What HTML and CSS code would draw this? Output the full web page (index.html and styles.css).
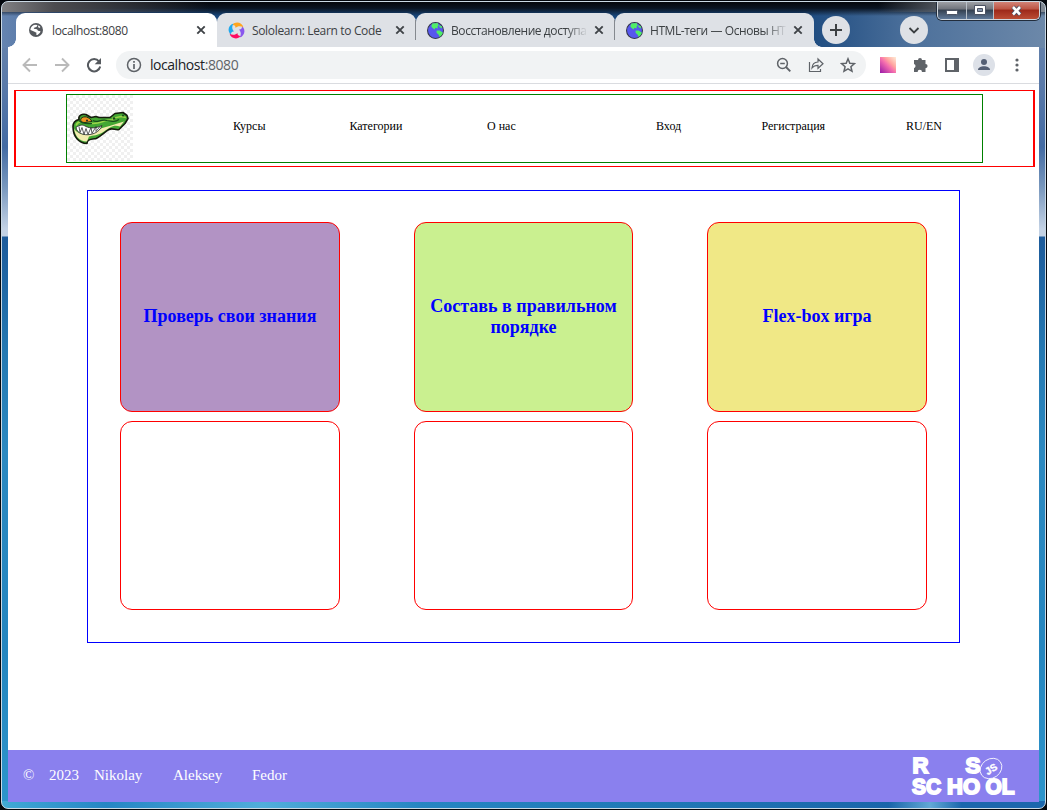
FILE: index.html
```
<!DOCTYPE html>
<html lang="ru">
<head>
<meta charset="utf-8">
<title>localhost:8080</title>
<link rel="stylesheet" href="styles.css">
</head>
<body>
<svg class="defs" width="0" height="0">
  <defs>
    <symbol id="x" viewBox="0 0 10 10"><path d="M1.3 1.3l7.4 7.4M8.7 1.3L1.3 8.7" stroke="#3f4347" stroke-width="1.9" fill="none"/></symbol>
    <symbol id="globe" viewBox="0 0 16 16"><circle cx="8" cy="8" r="7.5" fill="#5757ee" stroke="#35384a"/><path d="M5 1.500L10 1l1 2-1 1v2L8 5.500 7 7 5 5.500 4 4zM9 8h3l3 2-1 2-2 2-1-2-2-2zM11 3l3 1v2l-2-1z" fill="#50ee66"/></symbol>
  </defs>
</svg>
<div class="window">
  <div class="titlebar">
    <div class="tab tab-active">
      <svg width="16" height="16" viewBox="0 0 16 16"><circle cx="8" cy="8" r="7" fill="#55595e"/><path d="M2.500 7C3 5 4.500 3.200 7 2.700L9.500 3 8.500 5l-2 .5-.8 1.300L9 7.200l1 1.600 2.500.4-.5 1.600L9.500 13l-1.300-.3.300-1.900L6 9.500 2.500 8zM10.500 3.300l2 1.700-1.200 1L10 5z" fill="#fff"/></svg>
      <span class="tab-title">localhost:8080</span>
      <svg class="close" width="10" height="10"><use href="#x"/></svg>
    </div>
    <div class="tab">
      <svg width="17" height="17" viewBox="0 0 17 17"><path d="M4.500 3C7-1 14 0 15.500 5.500 12.500 3.500 9.500 4 7.500 6 7.800 4 6.500 3 4.500 3z" fill="#ffa51f"/><path d="M14 4.500C18 7 17 14 11.500 15.500 13.500 12.500 13 9.500 11 7.500 13 7.800 14 6.500 14 4.500z" fill="#8957ee"/><path d="M12.500 14C10 18 3 17 1.500 11.500 4.500 13.500 7.500 13 9.500 11 9.200 13 10.500 14 12.500 14z" fill="#ff0b62"/><path d="M3 12.500C-1 10 0 3 5.500 1.500 3.500 4.500 4 7.500 6 9.500 4 9.200 3 10.500 3 12.500z" fill="#20a8ec"/></svg>
      <span class="tab-title t2">Sololearn: Learn to Code</span>
      <svg class="close" width="10" height="10"><use href="#x"/></svg>
    </div>
    <div class="tab divided">
      <svg width="17" height="17"><use href="#globe"/></svg>
      <span class="tab-title t3">Восстановление доступа</span>
      <svg class="close" width="10" height="10"><use href="#x"/></svg>
    </div>
    <div class="tab divided last">
      <svg width="17" height="17"><use href="#globe"/></svg>
      <span class="tab-title t4">HTML-теги — Основы HT</span>
      <svg class="close" width="10" height="10"><use href="#x"/></svg>
    </div>
    <div class="round"><svg width="12" height="12"><path d="M6 0v12M0 6h12" stroke="#3c4043" stroke-width="2"/></svg></div>
    <div class="round search"><svg width="12" height="12"><path d="M1.500 4L6 8.500 10.500 4" stroke="#3c4043" stroke-width="1.800" fill="none"/></svg></div>
    <div class="controls">
      <div class="ctl min"><svg width="12" height="5"><rect x=".5" y=".5" width="11" height="4" rx="1" fill="#fff" stroke="#4c5363"/></svg></div>
      <div class="ctl max"><svg width="12" height="10"><path d="M.5.5h11v9H.5z" fill="#fff" stroke="#4c5363"/><path d="M3.500 3.500h5v3h-5z" fill="#8796ad" stroke="#4c5363"/></svg></div>
      <div class="ctl quit"><svg width="13" height="11" fill="none"><path d="M3 2l7 7.500M10 2L3 9.500" stroke="#4c5065" stroke-width="4.400"/><path d="M3 2l7 7.500M10 2L3 9.500" stroke="#fff" stroke-width="2.600"/></svg></div>
    </div>
  </div>
  <div class="toolbar">
    <div class="history">
      <svg width="16" height="16" fill="none" stroke="#bababa" stroke-width="1.900"><path d="M15 8H2M8 1.500L1.500 8 8 14.500"/></svg>
      <svg width="16" height="16" fill="none" stroke="#bababa" stroke-width="1.900"><path d="M1 8h13M8 1.500L14.500 8 8 14.500"/></svg>
      <svg width="16" height="16"><path d="M13 4.300A6.200 6.200 0 1 0 14.200 9.500" fill="none" stroke="#55595e" stroke-width="2"/><path d="M15 1v6.300H8.700z" fill="#55595e"/></svg>
    </div>
    <div class="address">
      <svg width="16" height="16"><circle cx="8" cy="8" r="6.500" fill="none" stroke="#5f6368" stroke-width="1.500"/><path d="M8 7v5M8 4v1.700" stroke="#5f6368" stroke-width="1.700"/></svg>
      <span class="url">localhost<span class="port">:8080</span></span>
      <div class="actions">
        <svg width="16" height="16" fill="none" stroke="#5f6368"><circle cx="6.500" cy="6.500" r="4.900" stroke-width="1.500"/><path d="M10 10l4.300 4.300" stroke-width="1.900"/><path d="M4.200 6.500h4.600" stroke-width="1.300"/></svg>
        <svg width="16" height="16" fill="none" stroke="#5f6368" stroke-width="1.200"><path d="M1.500 5v9.500h11V12"/><path d="M4 11C4.200 7.300 6.500 5.200 10 5V2l5 4.700-5 4.600V8.300C7.500 8.300 5.500 9 4 11z"/></svg>
        <svg width="16" height="16" fill="none" stroke="#5f6368" stroke-width="1.500"><path d="M8 1.800l1.800 4.400 4.700.4-3.600 3.100 1.100 4.600L8 11.900l-4 2.400 1.100-4.600-3.600-3.100 4.700-.4z"/></svg>
      </div>
    </div>
    <div class="extensions">
      <i class="ext"></i>
      <svg width="16" height="16"><path d="M5 3a2 2 0 0 1 4 0h3.500v4a2.100 2.100 0 1 1 0 4.200V15H9a2.200 2.200 0 0 0-4.400 0H1v-3.800a2.200 2.200 0 0 0 0-4.200V3z" fill="#5f6368"/></svg>
      <svg width="14" height="14"><path d="M0 0h14v14H0zM2 2v10h7V2z" fill="#5f6368" fill-rule="evenodd"/></svg>
      <svg width="22" height="22"><circle cx="11" cy="11" r="11" fill="#dde1e8"/><circle cx="11" cy="8" r="3" fill="#535e73"/><path d="M5 16c0-5 12-5 12 0z" fill="#535e73"/></svg>
      <svg class="more" width="4" height="14" fill="#5f6368"><circle cx="2" cy="2" r="1.600"/><circle cx="2" cy="7" r="1.600"/><circle cx="2" cy="12" r="1.600"/></svg>
    </div>
  </div>
  <div class="page">
    <header class="header">
      <div class="header-inner">
        <svg class="logo" width="66" height="66" viewBox="0 0 66 66">
          <g transform="translate(0 -.5)">
          <path d="M6 32c0-4 2-6 6-7-1-4 3-6 7-5l5 3 5-1 3 1 11 0 5-4 8-1 4 3 1 3-3 5-6 6c-3 1-7-2-10 0-4 2-8 7-13 9-6 1-9 1-9 5-8 0-14-7-14-17z" fill="#43a733" stroke="#151b0d" stroke-width="1.600" stroke-linejoin="round"/>
          <path d="M7 34c2 4 9 7 15 6 7-1 8-5 15-7 8-2 13-4 20-6l-4 5c-7-2-10 1-16 5-5 4-12 4-15 5l-2 5c-8 0-12-6-13-13z" fill="#f2ecae"/>
          <path d="M9 33c4-3 7-3 10-1 4 2 10 2 16-1-2 5-6 8-12 9-6 1-13-1-14-7z" fill="#fff" stroke="#222" stroke-width=".8"/>
          <path d="M12 32l1 6 2-5 2 7 2-6 2 6 3-7 1 6 4-7v5l4-5" fill="none" stroke="#333" stroke-width=".8"/>
          <path d="M9 31c2-5 8-5 12-3 7 3 14-1 18-2l9-1M45 24l9-2 5 1" fill="none" stroke="#9bd449" stroke-width="1.600"/>
          <path d="M14 24c3-3 8-2 11 3l-7 1c-3 0-5-1-4-4z" fill="#ef9420" stroke="#162a10"/>
          <path d="M26 26c4 3 8-2 14 0 5 0 7 3 12-1M12 26c4 4 9 3 13 3" fill="none" stroke="#174d1c" stroke-width="1.200"/>
          <circle cx="20" cy="26" r="1" fill="#222"/><circle cx="47" cy="24" r="1.300" fill="#164719"/><circle cx="56" cy="21" r="1" fill="#164719"/>
          </g>
        </svg>
        <nav class="nav"><a>Курсы</a><a>Категории</a><a>О нас</a><a>Вход</a><a>Регистрация</a><a>RU/EN</a></nav>
      </div>
    </header>
    <main class="main">
      <div class="card violet">Проверь свои знания</div>
      <div class="card lime">Составь в правильном порядке</div>
      <div class="card yellow">Flex-box игра</div>
      <div class="card"></div>
      <div class="card"></div>
      <div class="card"></div>
    </main>
    <footer class="footer">
      <div class="authors"><span>©</span><span>2023</span><span>Nikolay</span><span>Aleksey</span><span>Fedor</span></div>
      <svg class="school" width="106" height="44" viewBox="0 0 106 44">
        <g class="letters"><text x="1.500" y="19" textLength="16" lengthAdjust="spacingAndGlyphs">R</text><text x="54.500" y="19" textLength="15" lengthAdjust="spacingAndGlyphs">S</text><text x="1" y="39.500" textLength="29" lengthAdjust="spacingAndGlyphs">SC</text><text x="36" y="39.500" textLength="33" lengthAdjust="spacingAndGlyphs">HO</text><text x="74.500" y="39.500" textLength="29" lengthAdjust="spacingAndGlyphs">OL</text></g>
        <ellipse cx="80" cy="14.500" rx="11.500" ry="9.500" transform="rotate(-35 80 14.500)" fill="#8a80ee" stroke="#fff" stroke-width=".8"/>
        <text class="js" x="74" y="18.500" transform="rotate(-32 80 15)">JS</text>
      </svg>
    </footer>
  </div>
</div>
</body>
</html>
```
FILE: styles.css
```
* { box-sizing: border-box; }
body { margin: 0; background: #03070d; overflow: hidden; }
.defs { display: none; }
svg { display: block; flex: none; }
.window {
  width: 1045px; height: 808px; margin: 1px 0 0 1px; padding: 0 6px;
  border: 1px solid #cbd9e4; border-radius: 7px;
  overflow: hidden;
  background:
    linear-gradient(90deg, #808083 0, #4c4c50 5%, transparent 20%, transparent 84%, #5d6269 91%, #808994) 0 0 / 100% 10px no-repeat,
    linear-gradient(#05070c 0, #0a1422 45%, transparent) 0 0 / 100% 14px no-repeat,
    linear-gradient(90deg, #6584b0 0, #3c639a 8%, #17467c 20%, #17467c 76%, #4c709b 87%, #6c88a9) 0 0 / 100% 46px no-repeat,
    linear-gradient(90deg, #41aad5, #2586c4 10%, #51aedb 25%, #2686c2 40%, #1f77b4 65%, #1a65aa 85%, #62a9d6 89%, #1b67ad 92%) 0 100% / 100% 7px no-repeat,
    linear-gradient(#6d88ae 0, #5a7aa9 82px, #436ba3 145px, #7897bd 185px, #c3d2e5 227px, #c3d2e5 234px, #1d5b9b 235px, #2579b2 350px, #2c89c0 450px, #2586bf 650px, #2d95cb);
}
.titlebar { height: 45px; display: flex; align-items: flex-end; padding-left: 8px; position: relative; }
.tab { width: 199px; height: 34px; padding: 0 11px; background: #dee1e6; border-radius: 9px 9px 0 0; display: flex; align-items: center; flex: none; font: 12px "Open Sans", sans-serif; color: #3c4043; position: relative; }
.tab-active { width: 201px; background: #fff; padding-left: 12px; }
.tab-active::before { content: ""; position: absolute; left: -8px; bottom: 0; width: 8px; height: 8px; background: radial-gradient(circle at 0 0, transparent 7.5px, #fff 8px); }
.last::after { content: ""; position: absolute; right: -8px; bottom: 0; width: 8px; height: 8px; background: radial-gradient(circle at 100% 0, transparent 7.5px, #dee1e6 8px); }
.divided::before { content: ""; position: absolute; left: -1px; top: 7px; width: 1px; height: 20px; background: #85898f; }
.tab-title { margin-left: 8px; width: 137px; overflow: hidden; white-space: nowrap; }
.tab-active .tab-title { letter-spacing: -.36px; }
.tab-title.t2 { letter-spacing: -.34px; margin-left: 7px; }
.tab-title.t3, .tab-title.t4 { letter-spacing: -.42px; margin-left: 7px; mask-image: linear-gradient(90deg, #000 84%, transparent); }
.close { margin-left: auto; }
.round { width: 28px; height: 28px; border-radius: 50%; background: #dee1e6; display: flex; align-items: center; justify-content: center; margin: 0 0 3px 8px; }
.search { margin-left: 50px; }
.controls { position: absolute; right: -1px; top: -1px; width: 103px; height: 19px; display: flex; border: 1px solid #d1d8df; border-top: 0; border-radius: 0 0 5px 5px; overflow: hidden; box-shadow: 0 0 0 1px #222d3c; }
.ctl { display: flex; align-items: center; justify-content: center; background: linear-gradient(#a4a6aa, #70747c 45%, #34404f 50%, #5f7898); border-right: 1px solid #b9c0c8; }
.min { width: 29px; padding-top: 5px; }
.max { width: 27px; }
.quit { flex: 1; border: 0; background: linear-gradient(#d5897e, #bd5544 45%, #9d2819 50%, #bb4c34); }
.toolbar { height: 37px; background: #fff; border-bottom: 1px solid #dadce0; display: flex; align-items: center; padding: 0 20px 1px 14px; }
.history { display: flex; gap: 16px; width: 94px; }
.address { width: 751px; height: 28px; border-radius: 14px; background: #f1f3f4; display: flex; align-items: center; padding: 0 10px; font: 14px "Open Sans", sans-serif; color: #202124; }
.url { margin-left: 8px; letter-spacing: -.43px; }
.port { color: #5f6368; }
.actions { display: flex; gap: 16px; margin-left: auto; }
.extensions { display: flex; align-items: center; margin-left: 14px; }
.ext { width: 16px; height: 16px; margin-right: 17px; background: linear-gradient(45deg, #9818a8, #f66fae 48%, #ffa4a0 65%, #ffeed7); }
.extensions svg { margin-right: 14px; }
.extensions svg:nth-child(2) { margin-right: 16px; }
.extensions .more { margin: 0 0 0 6px; }
.page { height: 718px; background: #fff; display: flex; flex-direction: column; font-family: "Liberation Serif", serif; }
.header { height: 77px; margin: 6px 4px 0 6px; border: 1px solid red; border-width: 1px 2px; padding: 3px 50px; }
.header-inner { height: 69px; border: 1px solid green; display: flex; }
.logo { background: repeating-conic-gradient(#f0f0f0 0 25%, #fff 0 50%) 0 0 / 6px 6px; }
.nav { display: grid; grid-template-columns: 116.5px 137.5px 169px 105.5px 144.5px auto; margin: 24px 0 0 100px; font-size: 12px; line-height: 14px; white-space: nowrap; }
.main { width: 873px; height: 453px; margin: 23px 0 0 79px; border: 1px solid blue; padding: 31px 32px; display: grid; grid-template-columns: 220px 219px 220px; grid-template-rows: 190px 189px; justify-content: space-between; row-gap: 9px; }
.card { border: 1px solid red; border-radius: 12px; display: flex; align-items: center; justify-content: center; text-align: center; padding: 0 14px 1px; color: blue; font-weight: bold; font-size: 18px; line-height: 21px; }
.violet { background: #b293c4; }
.lime { background: #caf090; }
.yellow { background: #f0e886; }
.footer { height: 52px; margin-top: auto; background: #8a80ee; color: #fff; display: flex; align-items: center; justify-content: space-between; padding: 0 22px 0 15px; }
.authors { display: flex; font-size: 15px; line-height: 18px; padding-bottom: 2px; }
.authors span:nth-child(1) { width: 26px; }
.authors span:nth-child(2) { width: 45px; }
.authors span:nth-child(3) { width: 79px; }
.authors span:nth-child(4) { width: 79px; }
.letters { font: bold 22px/1 "Liberation Sans", sans-serif; fill: #fff; stroke: #fff; stroke-width: 1.9px; }
.js { font: bold 10px "Liberation Sans", sans-serif; fill: #fff; stroke: #fff; stroke-width: .4px; }
```
